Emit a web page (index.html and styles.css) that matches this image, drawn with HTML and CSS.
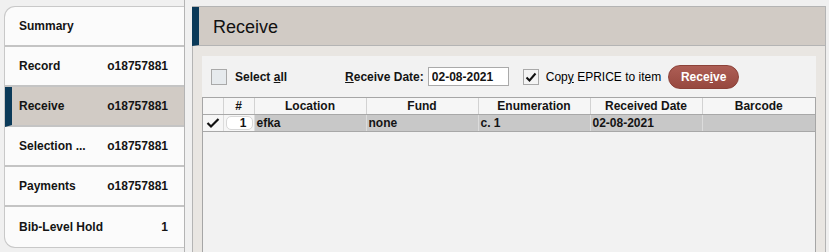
FILE: index.html
```html
<!DOCTYPE html>
<html lang="en">
<head>
  <meta charset="UTF-8" />
  <title>Receive</title>
  <link rel="stylesheet" href="styles.css">
</head>
<body>
  <div class="app">
    <div class="side-pane">
      <nav class="side">
        <div class="item"><span>Summary</span></div>
        <div class="item"><span>Record</span><span>o18757881</span></div>
        <div class="item active"><span>Receive</span><span>o18757881</span></div>
        <div class="item"><span>Selection ...</span><span>o18757881</span></div>
        <div class="item"><span>Payments</span><span>o18757881</span></div>
        <div class="item last"><span>Bib-Level Hold</span><span>1</span></div>
      </nav>
    </div>

    <main class="panel">
      <header class="panel-head"><h1>Receive</h1></header>
      <div class="panel-body">
        <div class="inner">
          <div class="toolbar">
            <label class="check"><span class="box"></span><b>Select <u>a</u>ll</b></label>
            <label class="date-label"><b><u>R</u>eceive Date:</b></label>
            <input class="date" type="text" value="02-08-2021" />
            <label class="check copy">
              <span class="box">
                <svg width="14" height="14" viewBox="0 0 14 14"><path d="M2.5 7.5 L5.5 10.5 L11.5 3.5" fill="none" stroke="#111" stroke-width="2"/></svg>
              </span>
              <span>Cop<u>y</u> EPRICE to item</span>
            </label>
            <button class="receive-btn">Rece<u>i</u>ve</button>
          </div>

          <div class="grid">
            <table>
              <colgroup>
                <col class="c-chk"><col class="c-num"><col class="c-wide"><col class="c-wide">
                <col class="c-wide"><col class="c-wide"><col>
              </colgroup>
              <thead>
                <tr>
                  <th></th><th>#</th><th>Location</th><th>Fund</th>
                  <th>Enumeration</th><th>Received Date</th><th>Barcode</th>
                </tr>
              </thead>
              <tbody>
                <tr>
                  <td class="chk"><svg width="14" height="12" viewBox="0 0 14 12"><path d="M1.5 6 L5 9.5 L12.5 2" fill="none" stroke="#111" stroke-width="2.2"/></svg></td>
                  <td class="num"><span class="num-box">1</span></td>
                  <td>efka</td>
                  <td>none</td>
                  <td>c. 1</td>
                  <td>02-08-2021</td>
                  <td></td>
                </tr>
              </tbody>
            </table>
          </div>
        </div>
      </div>
    </main>
  </div>
</body>
</html>
```

FILE: styles.css
```css
:root {
  --bg: #f0f0f0;
  --tan: #d1cbc5;
  --navy: #0b3a59;
  --line: #b4b4b4;
  --text: #141414;
}
* { box-sizing: border-box; }
body {
  margin: 0;
  background: var(--bg);
  color: var(--text);
  font-family: "Liberation Sans", Arial, sans-serif;
  font-size: 12px;
}
.app {
  display: flex;
  height: 252px;
  overflow: hidden;
}
.side-pane {
  width: 185px;
  flex: none;
  border-right: 1px solid var(--line);
  padding: 6px 0 0 4px;
}
.side {
  background: #fbfbfb;
  border: 1px solid #c8c8c8;
  border-right: none;
  border-radius: 11px 0 0 11px;
  overflow: hidden;
}
.item {
  display: flex;
  justify-content: space-between;
  align-items: center;
  height: 40px;
  padding: 0 16px 0 14px;
  border-bottom: 2px solid #c4c4c4;
  font-weight: bold;
}
.item.last { border-bottom: none; }
.item.active {
  background: var(--tan);
  border-left: 7px solid var(--navy);
  padding-left: 7px;
}

.panel {
  flex: 1;
  display: flex;
  flex-direction: column;
  margin: 6px 3px 0 7px;
  border-top: 1px solid var(--line);
  border-right: 1px solid var(--line);
}
.panel-head {
  height: 39px;
  background: var(--tan);
  border-left: 7px solid var(--navy);
  border-bottom: 1px solid var(--line);
  padding-left: 14px;
}
.panel-head h1 {
  margin: 0;
  font-size: 18px;
  font-weight: normal;
  line-height: 40px;
  color: #111;
}
.panel-body {
  flex: 1;
  background: #e9e6e2;
  border-left: 1px solid var(--line);
  padding: 10px 9px 0 9px;
  display: flex;
}
.inner {
  flex: 1;
  background: #f2f2f2;
  display: flex;
  flex-direction: column;
}

.toolbar {
  height: 41px;
  display: flex;
  align-items: center;
  padding-left: 9px;
}
.check {
  display: flex;
  align-items: center;
  gap: 8px;
}
.box {
  width: 16px;
  height: 16px;
  border: 1px solid #a9a9a9;
  background: #e6eaed;
  display: flex;
  align-items: center;
  justify-content: center;
}
.copy { margin-left: 14px; gap: 7px; color: #000; }
.copy .box { background: #f4f4f4; }
.date-label { margin-left: 58px; }
.date {
  width: 81px;
  height: 19px;
  margin-left: 4px;
  border: 1px solid #aaa;
  background: #fff;
  font: bold 12px "Liberation Sans", Arial, sans-serif;
  color: var(--text);
  padding: 0 3px;
}
.receive-btn {
  margin-left: 7px;
  width: 71px;
  height: 24px;
  border-radius: 12px;
  border: 1px solid #8c4239;
  background: linear-gradient(#ad5e55, #97483f);
  color: #fff;
  font: bold 12px "Liberation Sans", Arial, sans-serif;
  padding: 0;
}

.grid {
  flex: 1;
  border: 1px solid #a6a6a6;
  border-bottom: none;
}
table {
  width: 100%;
  border-collapse: collapse;
  table-layout: fixed;
}
.c-chk { width: 20px; }
.c-num { width: 31px; }
.c-wide { width: 112px; }
th {
  height: 16px;
  padding: 0;
  font-weight: bold;
  text-align: center;
  border-right: 1px solid #d2d2d2;
  border-bottom: 1px solid #a8a8a8;
  background: #f6f6f6;
}
td {
  height: 16px;
  padding: 0 2px;
  font-weight: bold;
  background: #c8c8c8;
  border-right: 1px solid #dcdcdc;
  border-bottom: 1px solid #a8a8a8;
  white-space: nowrap;
}
th:last-child, td:last-child { border-right: none; }
td.chk {
  background: #f6f6f6;
  text-align: center;
  padding: 0;
}
td.chk svg { display: block; margin: 0 auto; }
td.num {
  background: #f6f6f6;
  padding: 1px 1px 1px 2px;
}
.num-box {
  display: block;
  background: #fff;
  border: 1px solid #d8d8d8;
  border-radius: 5px;
  text-align: right;
  padding-right: 5px;
  line-height: 12px;
}
```
